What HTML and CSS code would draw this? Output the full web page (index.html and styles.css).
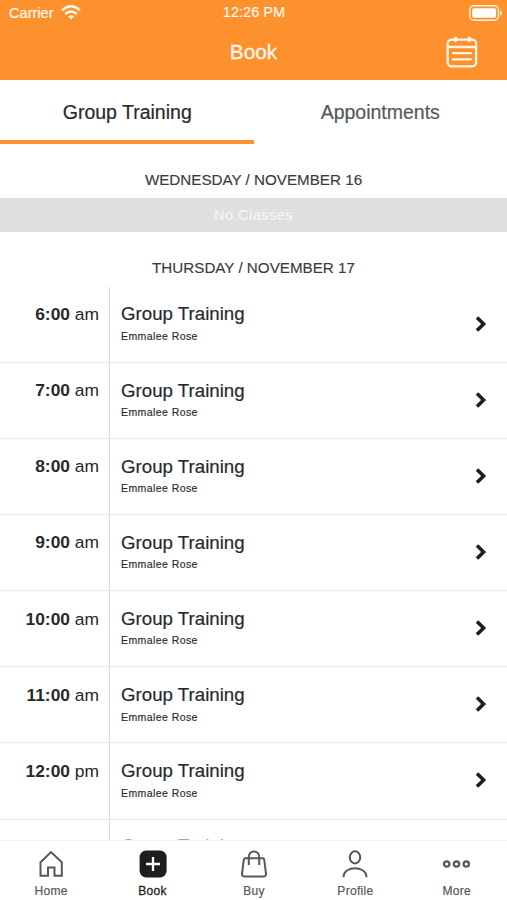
FILE: index.html
```html
<!DOCTYPE html>
<html lang="en">
<head>
<meta charset="utf-8">
<title>Book</title>
<link rel="stylesheet" href="styles.css">
</head>
<body>
<div class="app">
  <header class="top">
    <div class="status">
      <div class="carrier"><span>Carrier</span>
        <svg class="wifi" width="20" height="15" viewBox="0 0 20 15" fill="none" stroke="#fff6e8" stroke-width="2.4"><path d="M1 5.3Q10-2.7 19 5.3"/><path d="M4.3 9Q10 3.9 15.7 9"/><path d="M10 14.6L6.9 11.5Q10 8.8 13.1 11.5Z" fill="#fff6e8" stroke="none"/></svg>
      </div>
      <span class="clock">12:26 PM</span>
      <svg class="battery" width="34" height="16" viewBox="0 0 34 16"><rect x=".8" y=".8" width="28.6" height="14.4" rx="4" fill="none" stroke="#fff0d8" stroke-width="1.4"/><rect x="3.2" y="3.2" width="23.8" height="9.6" rx="1.8" fill="#fff"/><path d="M31 5.2q2 .8 2 2.8t-2 2.8z" fill="#fff0d8"/></svg>
    </div>
    <div class="titlebar">
      <h1 class="title">Book</h1>
      <svg class="calendar" width="32" height="32" viewBox="0 0 32 32" fill="none" stroke="#fff4e2" stroke-width="2.3" stroke-linecap="round"><rect x="1.7" y="3.6" width="28.4" height="26.7" rx="4"/><path d="M2 11H30M7 17.2H25M7 23.4H25"/><path d="M9.6 2.2V4.6M23.3 2.2V4.6" stroke-width="3.4"/></svg>
    </div>
  </header>
  <nav class="tabs">
    <div class="tab active">Group Training</div>
    <div class="tab">Appointments</div>
  </nav>
  <main class="schedule">
    <h2 class="day first">WEDNESDAY / NOVEMBER 16</h2>
    <div class="empty">No Classes</div>
    <h2 class="day second">THURSDAY / NOVEMBER 17</h2>
    <div class="list">
      <div class="row"><div class="time"><b>6:00</b> am</div><div class="info"><div class="name">Group Training</div><div class="coach">Emmalee Rose</div></div><svg class="chev" viewBox="0 0 12 18"><path d="M2 2.5L8.6 9L2 15.5"/></svg></div>
      <div class="row"><div class="time"><b>7:00</b> am</div><div class="info"><div class="name">Group Training</div><div class="coach">Emmalee Rose</div></div><svg class="chev" viewBox="0 0 12 18"><path d="M2 2.5L8.6 9L2 15.5"/></svg></div>
      <div class="row"><div class="time"><b>8:00</b> am</div><div class="info"><div class="name">Group Training</div><div class="coach">Emmalee Rose</div></div><svg class="chev" viewBox="0 0 12 18"><path d="M2 2.5L8.6 9L2 15.5"/></svg></div>
      <div class="row"><div class="time"><b>9:00</b> am</div><div class="info"><div class="name">Group Training</div><div class="coach">Emmalee Rose</div></div><svg class="chev" viewBox="0 0 12 18"><path d="M2 2.5L8.6 9L2 15.5"/></svg></div>
      <div class="row"><div class="time"><b>10:00</b> am</div><div class="info"><div class="name">Group Training</div><div class="coach">Emmalee Rose</div></div><svg class="chev" viewBox="0 0 12 18"><path d="M2 2.5L8.6 9L2 15.5"/></svg></div>
      <div class="row"><div class="time"><b>11:00</b> am</div><div class="info"><div class="name">Group Training</div><div class="coach">Emmalee Rose</div></div><svg class="chev" viewBox="0 0 12 18"><path d="M2 2.5L8.6 9L2 15.5"/></svg></div>
      <div class="row"><div class="time"><b>12:00</b> pm</div><div class="info"><div class="name">Group Training</div><div class="coach">Emmalee Rose</div></div><svg class="chev" viewBox="0 0 12 18"><path d="M2 2.5L8.6 9L2 15.5"/></svg></div>
      <div class="row last"><div class="time"></div><div class="info"><div class="name">Group Training</div></div></div>
    </div>
  </main>
  <nav class="bottom">
    <div class="item"><svg width="28" height="28" viewBox="0 0 28 28"><path d="M3.5 12.2L14 2.1L24.8 12.2V25.7H17.5V17.5H11V25.7H3.5Z"/></svg><span>Home</span></div>
    <div class="item current"><svg width="28" height="28" viewBox="0 0 28 28"><rect x=".6" y=".5" width="27" height="27" rx="6.5" fill="#1c1e20" stroke="none"/><path d="M14 7V21M7 14H21" stroke="#fff" stroke-width="2.3"/></svg><span>Book</span></div>
    <div class="item"><svg width="28" height="28" viewBox="0 0 28 28"><path d="M5.3 8.3H22.7Q24 8.3 24.2 9.6L26 23.6Q26.2 26.6 23.3 26.6H4.7Q1.8 26.6 2 23.6L3.8 9.6Q4 8.3 5.3 8.3ZM8.8 15V7C8.8-.4 19.2-.4 19.2 7V15"/></svg><span>Buy</span></div>
    <div class="item"><svg width="28" height="28" viewBox="0 0 28 28"><ellipse cx="14" cy="7.4" rx="5.2" ry="6.1"/><path d="M2.6 27.3V26C3.6 15.8 24.4 15.8 25.4 26V27.3"/></svg><span>Profile</span></div>
    <div class="item"><svg width="28" height="28" viewBox="0 0 28 28"><g stroke-width="2.2"><circle cx="3.7" cy="14" r="2.7"/><circle cx="13.5" cy="14" r="2.7"/><circle cx="23.3" cy="14" r="2.7"/></g></svg><span>More</span></div>
  </nav>
</div>
</body>
</html>
```
FILE: styles.css
```css
* { box-sizing: border-box; }
body { margin: 0; background: #fff; font-family: "Liberation Sans", Arial, sans-serif; color: #27292b; }
h1, h2 { margin: 0; font-weight: 400; }
svg { display: block; flex: none; }
.app { width: 507px; height: 900px; display: flex; flex-direction: column; overflow: hidden; }
.top { height: 80px; flex: none; background: #fd912e; color: #fff8ee; }
.status { height: 25px; display: grid; grid-template-columns: 1fr auto 1fr; align-items: center; padding: 0 4px 0 9px; font-size: 14.6px; -webkit-text-stroke: .2px #fff8ee; }
.carrier { display: flex; align-items: center; gap: 7px; }
.clock { margin: -2px 4px 0 0; }
.battery { justify-self: end; }
.titlebar { height: 54px; display: grid; grid-template-columns: 1fr auto 1fr; align-items: center; }
.title { grid-column: 2; font-size: 20.8px; line-height: 24px; -webkit-text-stroke: .3px #fff8ee; }
.calendar { justify-self: end; margin-right: 29px; }
.tabs { height: 64px; flex: none; display: grid; grid-template-columns: 1fr 1fr; }
.tab { text-align: center; font-size: 19.5px; line-height: 64px; color: #56595c; height: 64px; -webkit-text-stroke: .2px; }
.tab.active { color: #27292b; border-bottom: 4px solid #fd912e; padding-left: 1px; }
.schedule { flex: 1; min-height: 0; overflow: hidden; }
.day { text-align: center; font-size: 15.2px; color: #3a3c3e; -webkit-text-stroke: .15px; }
.first { height: 54px; line-height: 72px; }
.empty { height: 34px; line-height: 34px; background: #dfdfdf; color: #f6f6f6; text-align: center; font-size: 14.5px; letter-spacing: .5px; -webkit-text-stroke: .2px; }
.second { height: 54.6px; line-height: 72px; }
.row { height: 76.15px; display: flex; border-bottom: 1px solid #e9ebec; }
.time { width: 110px; flex: none; border-right: 1px solid #d7d9db; padding: 16.4px 10px 0 0; text-align: right; font-size: 17.4px; line-height: 22px; }
.info { flex: 1; padding: 16.9px 0 0 11px; }
.name { font-size: 18.7px; line-height: 22px; -webkit-text-stroke: .2px; }
.last .info { padding-top: 15px; }
.last .name { color: #a4a6a8; -webkit-text-stroke: 0; }
.coach { font-size: 10.5px; line-height: 14px; margin-top: 3.4px; letter-spacing: .42px; -webkit-text-stroke: .15px; }
.chev { width: 12px; height: 18px; margin: 28px 20.5px 0 0; fill: none; stroke: #1c1e20; stroke-width: 3.6; }
.bottom { height: 60px; flex: none; display: grid; grid-template-columns: repeat(5, 1fr); border-top: 1px solid #f3f3f3; background: #fff; }
.item { display: flex; flex-direction: column; align-items: center; padding: 9px 0 0 1px; font-size: 12px; letter-spacing: .3px; color: #55585b; -webkit-text-stroke: .2px; }
.item svg { fill: none; stroke: #55585b; stroke-width: 2; }
.item span { line-height: 16px; margin-top: 5px; }
.item.current { color: #1c1e20; -webkit-text-stroke: .3px #1c1e20; }
```
